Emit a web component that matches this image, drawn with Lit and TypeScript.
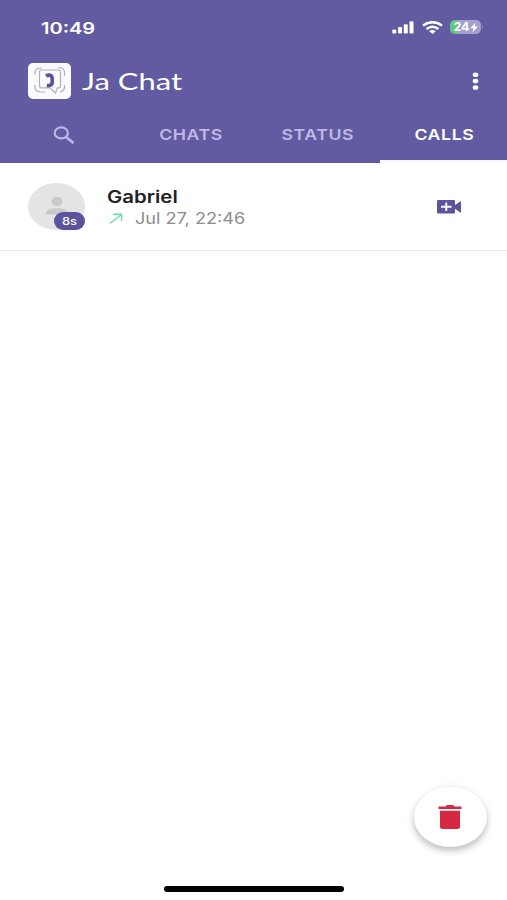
import { LitElement, html, css } from "lit";
import { customElement, property } from "lit/decorators.js";
import { classMap } from "lit/directives/class-map.js";

@customElement("status-bar")
class StatusBar extends LitElement {
  static styles = css`
    :host { display: flex; height: 54px; padding: 0 24px 0 41px; justify-content: space-between; align-items: center; box-sizing: border-box; color: #fff; }
    .time { font: 600 16px/20px Inter, sans-serif; margin-top: 1px; transform: scaleX(1.25); transform-origin: left; }
    .icons { display: flex; align-items: center; }
    svg { display: block; }
    .signal { margin: 1px 8px 0 0; }
    .wifi { margin-right: 7px; }
    .battery { display: flex; align-items: center; justify-content: center; box-sizing: border-box; padding-left: 2px; width: 31px; height: 14px; border-radius: 5px; background: linear-gradient(90deg, #63c77c 0 8px, #a39fce 8px); }
    .level { font: 700 11.500px/14px Inter, sans-serif; transform: scaleX(1.08); }
    .bolt { margin-left: 1.500px; }
    .cap { width: 1.500px; height: 4px; margin-left: 1px; border-radius: 0 2px 2px 0; background: #8983bf; }
  `;
  render() {
    return html`
      <span class="time">10:49</span>
      <div class="icons">
        <svg class="signal" width="22" height="13" viewBox="0 0 23 13" preserveAspectRatio="none" fill="#fff">
          <rect x="0.3" y="8.5" width="4.2" height="4" rx="1.2" /><rect x="6.3" y="6" width="4.2" height="6.5" rx="1.2" />
          <rect x="12.3" y="3.3" width="4.2" height="9.2" rx="1.2" /><rect x="18.3" y="0.3" width="4.2" height="12.2" rx="1.2" />
        </svg>
        <svg class="wifi" width="21" height="13" viewBox="0 0 21 13" fill="none" stroke="#fff" stroke-width="2.5">
          <path d="M1 4.600Q10.500 -2.200 20 4.600" /><path d="M4.500 8Q10.500 3.400 16.500 8" />
          <path d="M7.200 10.200Q10.500 7.900 13.800 10.200L10.500 13Z" fill="#fff" stroke="none" />
        </svg>
        <span class="battery"><span class="level">24</span>
          <svg class="bolt" width="8" height="11" viewBox="0 0 8 11" fill="#fff"><path d="M5.500 .5L.3 6.200H3.500L2.500 10.500L7.800 4.600H4.600Z" /></svg>
        </span>
        <span class="cap"></span>
      </div>`;
  }
}

@customElement("tab-bar")
class TabBar extends LitElement {
  @property() active = "CALLS";
  static styles = css`
    :host { display: grid; grid-template-columns: repeat(4, 1fr); height: 54px; }
    .tab { display: flex; align-items: center; justify-content: center; box-sizing: border-box; padding: 2.500px 0 0 1px; border-bottom: 3px solid transparent; color: #bfb8e6; font: 600 15px/18px Inter, sans-serif; }
    .on { color: #fff; border-color: #f8faff; }
    .label { transform: scaleX(1.18); letter-spacing: .5px; }
    .search { margin-bottom: 1px; }
  `;
  render() {
    return html`
      <div class="tab">
        <svg class="search" width="22" height="18" viewBox="0 0 22 18" fill="none" stroke="#bfb8e6">
          <ellipse cx="8.300" cy="6.900" rx="6.600" ry="5.500" stroke-width="2.100" /><path d="M13 11L20.500 17" stroke-width="2.700" />
        </svg>
      </div>
      ${["CHATS", "STATUS", "CALLS"].map(
        (t) => html`<div class=${classMap({ tab: true, on: t === this.active })}><span class="label">${t}</span></div>`
      )}`;
  }
}

@customElement("call-row")
class CallRow extends LitElement {
  @property() name = "";
  @property() when = "";
  @property() duration = "";
  static styles = css`
    :host { display: flex; height: 88.500px; box-sizing: border-box; padding: 0 46px 0 28px; align-items: center; border-bottom: 1px solid #ececee; }
    .avatar { position: relative; width: 57px; height: 47px; border-radius: 50%; background: #e4e4e4; display: flex; align-items: center; justify-content: center; }
    .duration { position: absolute; right: 0; bottom: 0; width: 31px; height: 18px; border-radius: 9px; background: #5d529e; color: #fff; text-align: center; font: 500 11px/19px Inter, sans-serif; }
    .duration span { display: inline-block; transform: scaleX(1.17); }
    .info { flex: 1; margin-left: 21.500px; padding-top: 4px; }
    .name { font: 600 17px/22px Inter, sans-serif; color: #222; transform: scaleX(1.2); transform-origin: left; width: max-content; }
    .meta { display: flex; align-items: center; height: 22px; }
    .arrow { margin: 0 11px 0 2px; }
    .date { font: 400 15.500px/22px Inter, sans-serif; color: #8d8d8f; transform: scaleX(1.17); transform-origin: left; white-space: nowrap; }
    .video { margin-top: 1px; }
  `;
  render() {
    return html`
      <div class="avatar">
        <svg width="22" height="18" viewBox="0 0 22 18" fill="#c9c9c9"><ellipse cx="11" cy="4.500" rx="5.500" ry="4.500" /><path d="M0 17.500V15C0 12.500 6 11.200 11 11.200S22 12.500 22 15V17.500Z" /></svg>
        <span class="duration"><span>${this.duration}</span></span>
      </div>
      <div class="info">
        <div class="name">${this.name}</div>
        <div class="meta">
          <svg class="arrow" width="15" height="12" viewBox="0 0 15 12" fill="none" stroke="#70dcab" stroke-width="1.500"><path d="M.8 10.500L12.300 1.500M4 1.200H12.500V7.800" /></svg>
          <span class="date">${this.when}</span>
        </div>
      </div>
      <svg class="video" width="24" height="14" viewBox="0 0 24 14" fill="#5d529e">
        <path d="M1.200 0H17Q18 0 18 1V5L24 .9V13L18 8.800V12.500Q18 13.500 17 13.500H1.200Q0 13.500 0 12.500V1Q0 0 1.200 0Z" />
        <path d="M4 6.700H14.500M9.250 2.500V11" stroke="#fff" stroke-width="1.900" />
      </svg>`;
  }
}

@customElement("app-root")
class AppRoot extends LitElement {
  static styles = css`
    :host { display: flex; flex-direction: column; position: relative; width: 507px; height: 900px; overflow: hidden; background: #fff; }
    .top { height: 162.500px; background: #625ba1; }
    .brand { display: flex; align-items: center; height: 54.500px; padding: 0 27px 0 28px; }
    .title { flex: 1; margin-left: 11px; color: #fff; font: 400 24px/30px Lato, sans-serif; }
    .title span { display: inline-block; transform: scaleX(1.29); transform-origin: left; }
    .logo { display: block; }
    .fab { position: absolute; left: 414px; top: 787px; width: 73px; height: 60px; border: 0; padding: 0 1px 0 0; border-radius: 50%; background: #fff; display: flex; align-items: center; justify-content: center; box-shadow: 0 4px 6px rgba(0,0,0,.2), 0 2px 12px rgba(0,0,0,.08); }
    .home { width: 180px; height: 6px; border-radius: 3px; background: #000; margin: auto auto 8px; }
  `;
  render() {
    return html`
      <header class="top">
        <status-bar></status-bar>
        <div class="brand">
          <svg class="logo" width="43" height="36" viewBox="0 0 43 36" fill="none">
            <rect width="43" height="36" rx="5" fill="#fbfaff" />
            <g stroke="#b3afbd" stroke-width="1.200">
              <path d="M13.500 7H30.500Q32.500 7 32.500 9V22.500Q32.500 24.800 30.500 24.800H29.500L27.500 30L22 24.800H13.500Q11.500 24.800 11.500 22.500V9Q11.500 7 13.500 7Z" />
              <path d="M7 12V9.500Q7 5.500 12 5H14M30 4.500Q36.500 4.500 36.500 9.500V13M7 22V25Q8 28.500 12 29H17M36.500 22V25Q35.500 28 32 29" />
            </g>
            <path d="M18 13Q20 11.800 22 12.200Q24.500 13 24.200 16.500V20Q23.700 23 18.800 22.500" stroke="#5d4f9e" stroke-width="3.600" />
          </svg>
          <div class="title"><span>Ja Chat</span></div>
          <svg width="9" height="20" viewBox="0 0 9 20" fill="#fff"><ellipse cx="4.500" cy="3.700" rx="2.800" ry="2.300" /><ellipse cx="4.500" cy="10" rx="2.800" ry="2.300" /><ellipse cx="4.500" cy="16.500" rx="2.800" ry="2.300" /></svg>
        </div>
        <tab-bar></tab-bar>
      </header>
      <call-row name="Gabriel" when="Jul 27, 22:46" duration="8s"></call-row>
      <button class="fab" aria-label="Delete">
        <svg width="24" height="26" viewBox="0 0 24 26" fill="#d72842"><path d="M.5 2.600H7.500L9 1H15L16.500 2.600H23.500V5H.5Z" /><path d="M2 6.800H22V22.500Q22 25 19.500 25H4.500Q2 25 2 22.500Z" /></svg>
      </button>
      <div class="home"></div>`;
  }
}
